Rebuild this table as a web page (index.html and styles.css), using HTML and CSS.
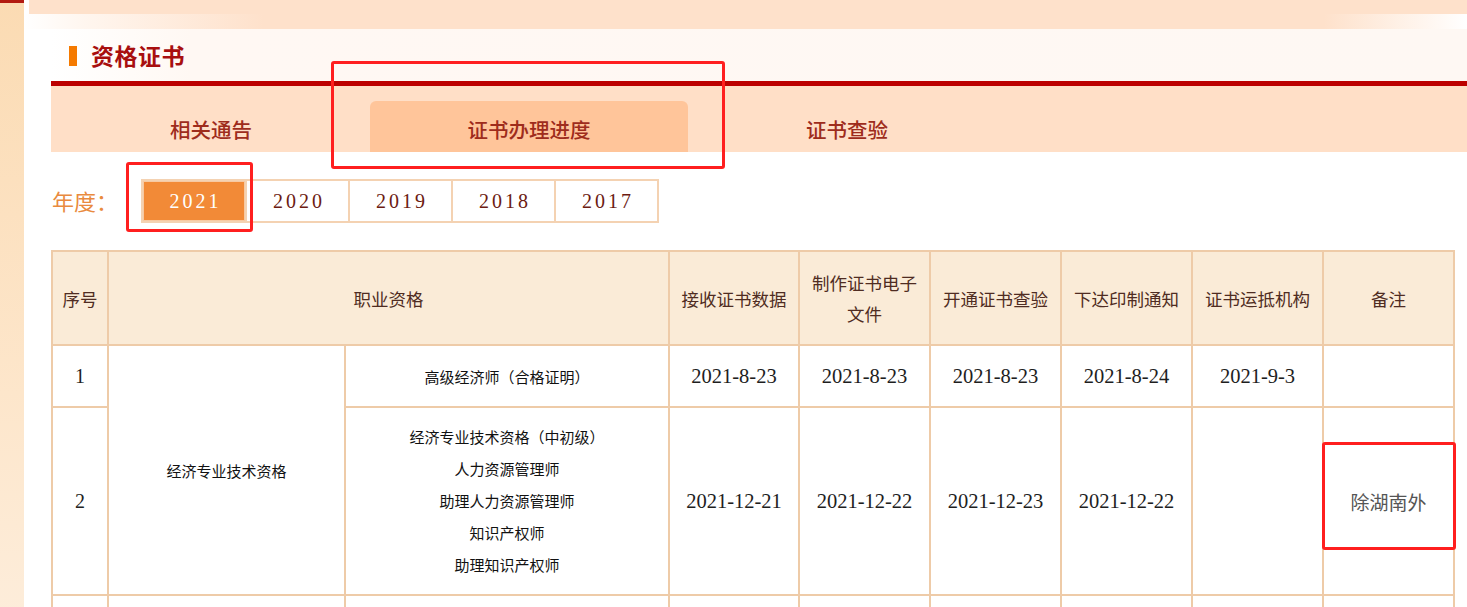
FILE: index.html
```html
<!DOCTYPE html>
<html lang="zh-CN">
<head>
<meta charset="utf-8">
<title>资格证书</title>
<link rel="stylesheet" href="styles.css">
</head>
<body>
<div class="page">
  <aside class="side"><div class="side-top"></div></aside>
  <main class="main">
    <div class="band1"></div>
    <div class="band2"></div>
    <section class="panel">
      <header class="title-bar">
        <span class="title-mark"></span>
        <h1 class="title">资格证书</h1>
      </header>
      <nav class="tabs">
        <div class="tab">相关通告</div>
        <div class="tab active">证书办理进度</div>
        <div class="tab">证书查验</div>
      </nav>
      <div class="years">
        <span class="years-label">年度：</span>
        <div class="year-list">
          <span class="year active">2021</span>
          <span class="year">2020</span>
          <span class="year">2019</span>
          <span class="year">2018</span>
          <span class="year">2017</span>
        </div>
      </div>
      <table class="grid">
        <colgroup>
          <col class="w-no"><col class="w-q1"><col class="w-q2">
          <col class="w-d0"><col class="w-d"><col class="w-d"><col class="w-d"><col class="w-d"><col class="w-d">
        </colgroup>
        <thead>
          <tr class="head-row">
            <th>序号</th>
            <th colspan="2">职业资格</th>
            <th>接收证书数据</th>
            <th>制作证书电子<br>文件</th>
            <th>开通证书查验</th>
            <th>下达印制通知</th>
            <th>证书运抵机构</th>
            <th>备注</th>
          </tr>
        </thead>
        <tbody>
          <tr class="row1">
            <td class="num">1</td>
            <td class="qual" rowspan="2">经济专业技术资格</td>
            <td class="sub">高级经济师（合格证明）</td>
            <td class="date">2021-8-23</td>
            <td class="date">2021-8-23</td>
            <td class="date">2021-8-23</td>
            <td class="date">2021-8-24</td>
            <td class="date">2021-9-3</td>
            <td></td>
          </tr>
          <tr class="row2">
            <td class="num">2</td>
            <td class="sub multi">经济专业技术资格（中初级）<br>人力资源管理师<br>助理人力资源管理师<br>知识产权师<br>助理知识产权师</td>
            <td class="date">2021-12-21</td>
            <td class="date">2021-12-22</td>
            <td class="date">2021-12-23</td>
            <td class="date">2021-12-22</td>
            <td></td>
            <td class="note">除湖南外</td>
          </tr>
          <tr class="row3">
            <td></td><td></td><td></td><td></td><td></td><td></td><td></td><td></td><td></td>
          </tr>
        </tbody>
      </table>
    </section>
  </main>
</div>
<div class="mark mark-tab"></div>
<div class="mark mark-year"></div>
<div class="mark mark-note"></div>
</body>
</html>
```

FILE: styles.css
```css
* { box-sizing: border-box; }
html, body { margin: 0; padding: 0; }
body {
  width: 1467px;
  height: 607px;
  overflow: hidden;
  background: #fff;
  font-family: "Liberation Serif", "Noto Sans CJK SC", serif;
  position: relative;
}
.page { display: flex; min-height: 607px; }
.side {
  width: 24px;
  flex: none;
  background: linear-gradient(to bottom, #fbdbb3 0%, #fde6cb 60%, #fdeedd 100%);
}
.side-top { height: 3px; width: 25px; background: #b21a10; }
.main { flex: 1; min-width: 0; }
.band1 {
  height: 14px;
  background: linear-gradient(to right, #fff 0, #fff 5px, #fee1cb 5px, #fee1cb 100%);
}
.band2 {
  height: 15px;
  background: linear-gradient(to right, #ffffff 0, #fff6ef 60px, #fee1cb 240px, #fee1cb 1300px, #fffaf6 1420px, #fff 100%);
}
.panel { padding-left: 27px; }
.title-bar {
  display: flex;
  align-items: center;
  gap: 14px;
  padding-left: 18px;
  background: linear-gradient(to right, #fff 0, #fff8f3 140px, #fef8f3 100%);
  border-bottom: 5px solid #bc0000;
  height: 57px;
}
.title-mark { width: 8px; height: 20px; background: #f57a00; margin-top: 2px; }
.title {
  margin: 0;
  font-family: "Noto Sans CJK SC", sans-serif;
  font-size: 23px;
  font-weight: 700;
  color: #a80f0f;
  letter-spacing: 0.5px;
  line-height: 30px;
}
.tabs {
  height: 66px;
  background: #ffdfc7;
  display: flex;
  align-items: flex-end;
  padding-left: 1px;
}
.tab {
  width: 318px;
  height: 51px;
  padding-top: 16px;
  line-height: 24px;
  text-align: center;
  font-family: "Noto Sans CJK SC", sans-serif;
  font-size: 20.5px;
  font-weight: 500;
  color: #9e2c1c;
}
.tab.active { background: #ffc59a; border-radius: 6px 6px 0 0; }
.years {
  display: flex;
  align-items: center;
  margin-top: 27px;
  height: 44px;
  padding-left: 1px;
}
.years-label {
  font-family: "Noto Sans CJK SC", sans-serif;
  font-size: 22px;
  color: #e98a3e;
  width: 89px;
  line-height: 30px;
  margin-top: -3px;
}
.year-list { display: flex; }
.year {
  width: 105px;
  height: 44px;
  margin-left: -2px;
  border: 2px solid #f4d2b2;
  display: flex;
  align-items: center;
  justify-content: center;
  font-family: "Liberation Serif", serif;
  font-size: 20px;
  letter-spacing: 3px;
  padding-left: 3px;
  color: #6c1b12;
}
.year:first-child { margin-left: 0; width: 106px; }
.year.active {
  background: #f28a37;
  color: #fff;
  box-shadow: inset 0 0 0 1px #f7c9a2;
}
.grid {
  margin-top: 27px;
  width: 1403px;
  border-collapse: collapse;
  table-layout: fixed;
  border: 2px solid #eecba8;
}
.w-no { width: 56px; }
.w-q1 { width: 237px; }
.w-q2 { width: 324px; }
.w-d0 { width: 130px; }
.w-d { width: 131px; }
.grid th, .grid td {
  border: 2px solid #eecba8;
  text-align: center;
  vertical-align: middle;
  padding: 0;
}
.grid th {
  background: #faebd7;
  font-family: "Noto Sans CJK SC", sans-serif;
  font-weight: 400;
  font-size: 17.5px;
  line-height: 31px;
  color: #4f2c22;
}
.head-row { height: 94px; }
.row1 { height: 62px; }
.row2 { height: 188px; }
.row3 { height: 60px; }
.num { font-size: 20px; color: #222; }
.date { font-size: 20.5px; color: #1e1e1e; }
.qual, .sub {
  font-family: "Noto Sans CJK SC", sans-serif;
  font-size: 15px;
  color: #111;
}
.sub.multi { line-height: 32px; }
.note {
  font-family: "Noto Sans CJK SC", sans-serif;
  font-size: 19px;
  color: #555;
  padding-left: 2px;
}
.mark {
  position: absolute;
  border: 3px solid #ff1f1f;
  border-radius: 3px;
  pointer-events: none;
}
.mark-tab { left: 331px; top: 61px; width: 394px; height: 108px; }
.mark-year { left: 126px; top: 162px; width: 127px; height: 70px; }
.mark-note { left: 1322px; top: 442px; width: 134px; height: 108px; }
```
